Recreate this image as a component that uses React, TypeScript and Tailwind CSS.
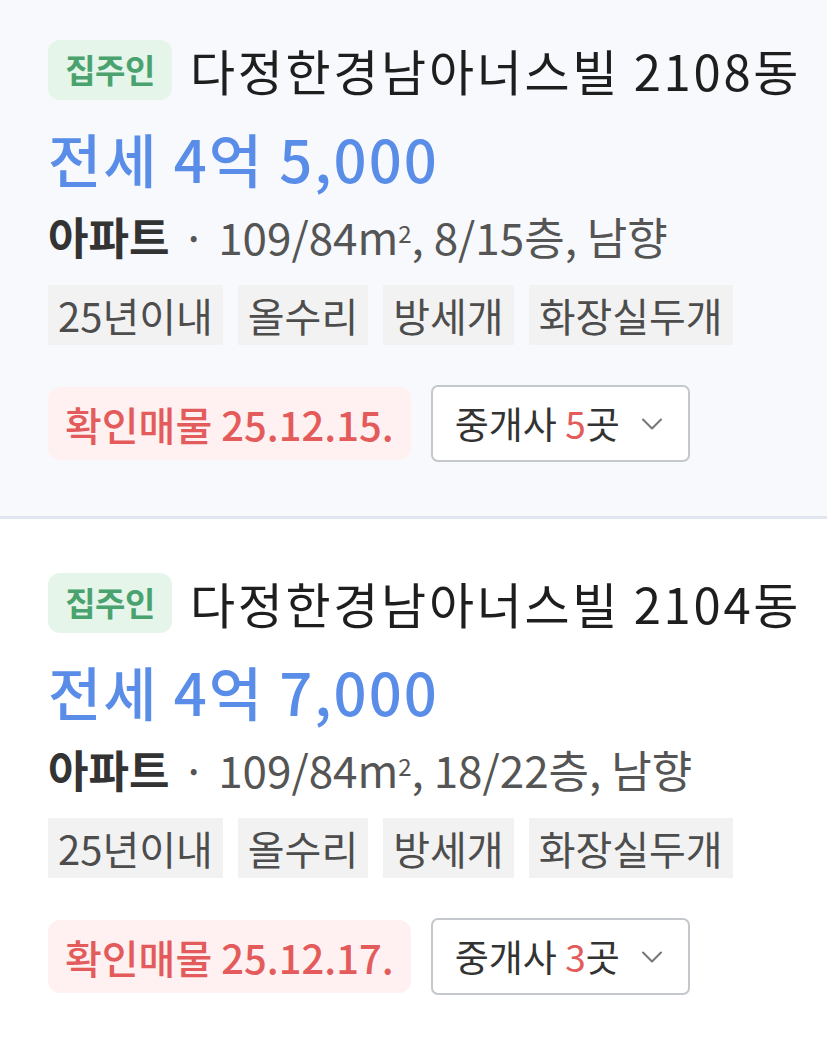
import { ChevronDown } from "lucide-react";

type Listing = {
  name: string;
  price: string;
  floor: string;
  date: string;
  brokers: number;
};

const listings: Listing[] = [
  { name: "다정한경남아너스빌 2108동", price: "전세 4억 5,000", floor: "8/15층", date: "25.12.15.", brokers: 5 },
  { name: "다정한경남아너스빌 2104동", price: "전세 4억 7,000", floor: "18/22층", date: "25.12.17.", brokers: 3 },
];

const tags = ["25년이내", "올수리", "방세개", "화장실두개"];

const ListingCard = ({ item, first }: { item: Listing; first: boolean }) => {
  return (
    <div
      className={
        first
          ? "bg-[#f7f9fd] pl-[48px] pt-[40px] pb-[54px] border-b-[3px] border-[#dfe6f0]"
          : "bg-white pl-[48px] pt-[54px] pb-[54px]"
      }
    >
      {/* 제목 */}
      <div className="flex items-center h-[60px]">
        <span className="flex items-center justify-center h-[60px] w-[124px] rounded-[12px] bg-[#e5f5ea] text-[#4aa36f] text-[33px] font-bold tracking-[-0.5px]">
          집주인
        </span>
        <span className="ml-[18px] text-[49px] text-[#1e1e1e] tracking-[2.7px] whitespace-nowrap">{item.name}</span>
      </div>

      {/* 가격 */}
      <div className="mt-[28px] h-[60px] flex items-center text-[58px] font-medium text-[#5a8de8] tracking-[2px]">
        {item.price}
      </div>

      {/* 정보 */}
      <div className="mt-[26px] h-[44px] flex items-center text-[44px] text-[#555] whitespace-nowrap">
        <span className="font-bold text-[#333]">아파트</span>
        <span className="mx-[12px]">·</span>
        <span>
          109/84m<sup className="text-[24px]">2</sup>, {item.floor}, 남향
        </span>
      </div>

      {/* 태그 */}
      <div className="mt-[27px] flex gap-[15px]">
        {tags.map((t) => (
          <span
            key={t}
            className="h-[60px] px-[10px] flex items-center bg-[#f2f2f3] text-[#4d4d4d] text-[40px]"
          >
            {t}
          </span>
        ))}
      </div>

      {/* 확인매물 / 중개사 */}
      <div className="mt-[40px] flex items-center gap-[20px]">
        <span className="h-[73px] px-[17px] flex items-center rounded-[12px] bg-[#fff1f1] text-[#e35b5b] text-[40px] font-medium">
          확인매물 {item.date}
        </span>
        <button className="h-[77px] pl-[22px] pr-[18px] flex items-center gap-[14px] rounded-[7px] border-2 border-[#c4c7cc] bg-white text-[37px] text-[#333]">
          <span>
            중개사 <span className="text-[#e35b5b]">{item.brokers}</span>곳
          </span>
          <ChevronDown className="w-[36px] h-[36px] text-[#777]" strokeWidth={1.4} />
        </button>
      </div>
    </div>
  );
};

export default function App() {
  return (
    <div
      className="w-[827px] h-[1047px] overflow-hidden bg-white"
      style={{ fontFamily: '"Noto Sans CJK KR", "Noto Sans", sans-serif' }}
    >
      {listings.map((item, i) => (
        <ListingCard key={item.name} item={item} first={i === 0} />
      ))}
    </div>
  );
}
